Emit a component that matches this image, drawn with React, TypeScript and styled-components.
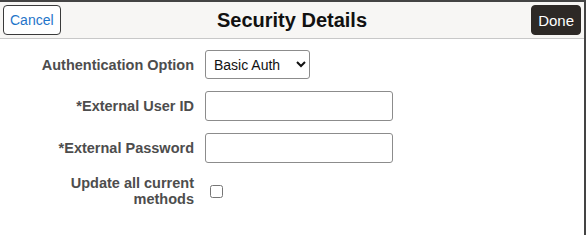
import React from 'react';
import styled, {createGlobalStyle} from "styled-components";

const GlobalStyle = createGlobalStyle`
  html, body {
    margin: 0;
    padding: 0;
    background: #fff;
  }
  body {
    font-family: "Liberation Sans", Arial, sans-serif;
  }
`

const Dialog = styled.div`
  width: 586px;
  height: 235px;
  box-sizing: border-box;
  border-top: 2px solid #444;
  border-right: 2px solid #444;
  background: #fff;
`

const Header = styled.div`
  height: 37px;
  box-sizing: border-box;
  display: flex;
  align-items: center;
  justify-content: space-between;
  padding: 0 3px 0 3px;
  background: #f7f6f4;
  border-bottom: 1px solid #c8c8c8;
  position: relative;
`

const Title = styled.h1`
  margin: 0;
  font-size: 20px;
  font-weight: bold;
  color: #111;
  position: absolute;
  left: 0;
  right: 0;
  text-align: center;
  pointer-events: none;
`

const HeaderButton = styled.button<{ $primary?: boolean }>`
  height: 30px;
  box-sizing: border-box;
  padding: 0 ${p => p.$primary ? '6px' : '6px'};
  font-family: "Liberation Sans", Arial, sans-serif;
  font-size: ${p => p.$primary ? '15px' : '14px'};
  border-radius: 4px;
  border: 1px solid ${p => p.$primary ? '#2d2926' : '#3a3a3a'};
  background: ${p => p.$primary ? '#2d2926' : '#fff'};
  color: ${p => p.$primary ? '#fff' : '#1f75c9'};
  cursor: pointer;
`

const Form = styled.div`
  display: grid;
  grid-template-columns: 194px auto;
  column-gap: 11px;
  row-gap: 12px;
  align-items: center;
  padding-top: 11px;
`

const Label = styled.label`
  font-size: 14.5px;
  font-weight: bold;
  color: #4d4d4d;
  text-align: right;
  line-height: 16px;
  justify-self: end;
  max-width: 165px;
`

const Select = styled.select`
  justify-self: start;
  width: 105px;
  height: 29px;
  font-family: "Liberation Sans", Arial, sans-serif;
  font-size: 14px;
  color: #111;
  border: 1px solid #8c8c8c;
  border-radius: 3px;
  background: #fff;
  padding: 0 4px;
`

const TextInput = styled.input`
  justify-self: start;
  width: 188px;
  height: 30px;
  box-sizing: border-box;
  border: 1px solid #8c8c8c;
  border-radius: 3px;
  font-size: 14px;
  padding: 0 6px;
`

const CheckCell = styled.div`
  display: flex;
  align-items: center;
  height: 28px;
`

const Checkbox = styled.input`
  width: 13px;
  height: 13px;
  margin: 0 0 0 5px;
`

export default function App() {
    return (
        <>
            <GlobalStyle/>
            <Dialog>
                <Header>
                    <HeaderButton>Cancel</HeaderButton>
                    <Title>Security Details</Title>
                    <HeaderButton $primary>Done</HeaderButton>
                </Header>
                <Form>
                    <Label>Authentication Option</Label>
                    <Select defaultValue="basic">
                        <option value="basic">Basic Auth</option>
                    </Select>
                    <Label>*External User ID</Label>
                    <TextInput type="text"/>
                    <Label>*External Password</Label>
                    <TextInput type="password"/>
                    <Label>Update all current methods</Label>
                    <CheckCell>
                        <Checkbox type="checkbox"/>
                    </CheckCell>
                </Form>
            </Dialog>
        </>
    );
}
